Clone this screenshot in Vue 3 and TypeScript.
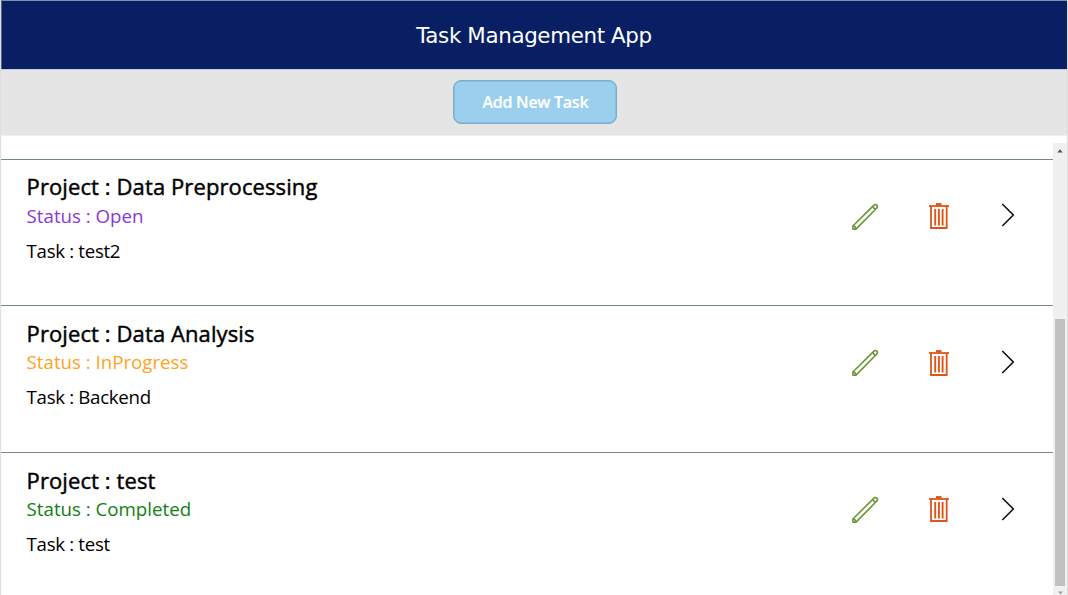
<script setup lang="ts">
interface Task {
  project: string
  status: 'Open' | 'InProgress' | 'Completed'
  task: string
}

const tasks: Task[] = [
  { project: 'Data Preprocessing', status: 'Open', task: 'test2' },
  { project: 'Data Analysis', status: 'InProgress', task: 'Backend' },
  { project: 'test', status: 'Completed', task: 'test' },
]
</script>

<template>
  <div class="app">
    <header class="header"><h1>Task Management App</h1></header>
    <div class="toolbar"><button class="add" type="button">Add New Task</button></div>
    <main class="body">
      <div class="list">
        <article v-for="t in tasks" :key="t.project" class="row">
          <div class="info">
            <h2 class="project">Project : {{ t.project }}</h2>
            <p class="status" :class="t.status.toLowerCase()">Status : {{ t.status }}</p>
            <p class="task">Task : {{ t.task }}</p>
          </div>
          <div class="actions">
            <svg class="pencil" width="28" height="28" viewBox="0 0 28 28" fill="none" stroke="#6a9734" stroke-width="1.6" stroke-linejoin="round">
              <path d="M1.9 26.1V23L22.7 2.4C23.7 1.4 25.1 1.3 25.9 2.1C26.7 2.9 26.6 4.3 25.6 5.3L5 26.1Z" />
              <path d="M1.9 23Q4.8 23.2 5 26.1M22 3.1Q22.1 5.8 24.9 6" stroke-width="1.4" />
            </svg>
            <svg class="trash" width="22" height="28" viewBox="0 0 22 28" fill="none" stroke="#df5417">
              <path d="M1 4H21" stroke-width="1.8" />
              <path d="M8 2.3H13.5" stroke-width="2.4" />
              <path d="M3 4V26H18.7V4" stroke-width="1.8" />
              <path d="M7.2 7V23.5M10.9 7V23.5M14.6 7V23.5" stroke-width="1.9" />
            </svg>
            <svg class="chevron" width="14" height="24" viewBox="0 0 14 24" fill="none" stroke="#111" stroke-width="1.6">
              <path d="M1.3 1L12.3 12L1.3 23" />
            </svg>
          </div>
        </article>
      </div>
      <div class="scrollbar">
        <svg class="arrow" width="6" height="4" viewBox="0 0 6 4"><path d="M.3 3.5L3 .2L5.7 3.5Z" fill="#505050" /></svg>
        <div class="thumb"></div>
        <svg class="arrow" width="5" height="4" viewBox="0 0 5 4"><path d="M0 .5H5L2.5 3.5Z" fill="#a3a3a3" /></svg>
      </div>
    </main>
  </div>
</template>

<style>
body {
  margin: 0;
  background: #fff;
}
</style>

<style scoped>
.app {
  box-sizing: border-box;
  width: 1068px;
  height: 595px;
  border-left: 1px solid #dedede;
  border-right: 1px solid #dedede;
  display: flex;
  flex-direction: column;
  overflow: hidden;
  font-family: "Open Sans", "Noto Sans", sans-serif;
}
h1, h2, p {
  margin: 0;
  font-weight: 400;
  white-space: nowrap;
}
.header {
  box-sizing: border-box;
  height: 69px;
  flex: none;
  background: #082063;
  border-top: 1px solid #8090b1;
  border-left: 1px solid #52638f;
  display: flex;
  align-items: center;
  justify-content: center;
  padding: 2px 1px 0 0;
}
h1 {
  color: #fff;
  font: 400 21.4px/30px "DejaVu Sans", sans-serif;
  letter-spacing: -0.36px;
}
.toolbar {
  box-sizing: border-box;
  height: 67px;
  flex: none;
  background: #e5e5e5;
  border-top: 1px solid #c5cadd;
  border-bottom: 1px solid #f0f0f0;
  padding: 10px 0 0 452.4px;
}
.add {
  display: block;
  width: 164px;
  height: 44px;
  padding: 0;
  border: 1.5px solid #7badc9;
  box-shadow: inset 0 0 0 0.5px #7badc9;
  border-radius: 8px;
  background: #9acfee;
  color: #fff;
  font: 600 16px/40px "Open Sans", sans-serif;
  letter-spacing: -0.25px;
  -webkit-text-stroke: 0.2px currentColor;
}
.body {
  flex: 1;
  min-height: 0;
  display: flex;
}
.list {
  flex: 1;
  padding-top: 22.6px;
}
.row {
  box-sizing: border-box;
  height: 146.7px;
  border-top: 1px solid #76888f;
  padding: 12.6px 38px 0 25.6px;
  display: flex;
  justify-content: space-between;
}
.project {
  font-size: 22px;
  line-height: 28px;
  color: #000;
  letter-spacing: 0.1px;
  -webkit-text-stroke: 0.45px currentColor;
}
.status {
  margin-top: 1.4px;
  font-size: 18.7px;
  line-height: 28px;
}
.open { color: #8a38d8; }
.inprogress { color: #ffa21f; }
.completed { color: #128012; }
.task {
  margin-top: 7px;
  font-size: 18.7px;
  line-height: 28px;
  letter-spacing: -0.32px;
  color: #000;
}
.actions {
  display: flex;
  align-items: center;
  height: 86px;
}
.pencil { margin-top: 3px; }
.trash {
  margin-left: 49px;
  margin-top: 1.4px;
}
.chevron { margin-left: 51px; }
.scrollbar {
  box-sizing: border-box;
  width: 14px;
  margin-top: 7px;
  background: #f0f0f0;
  display: flex;
  flex-direction: column;
  align-items: center;
  padding: 6px 0 0;
}
.thumb {
  width: 10px;
  height: 267px;
  margin-top: auto;
  margin-bottom: 5px;
  background: #c1c1c1;
}
.arrow { display: block; flex: none; }
</style>
